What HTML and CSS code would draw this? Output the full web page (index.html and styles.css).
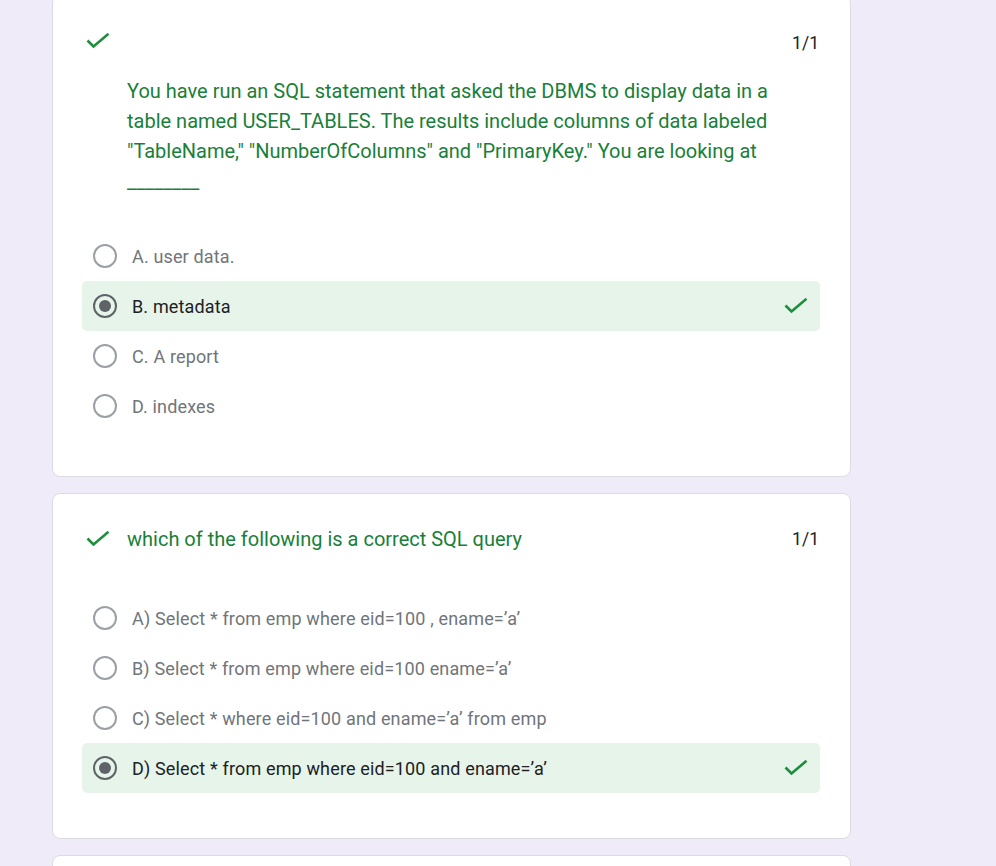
FILE: index.html
```html
<!DOCTYPE html>
<html>
<head>
<meta charset="utf-8">
<link rel="stylesheet" href="styles.css">
</head>
<body>
<div class="page">
  <div class="card card-first">
    <div class="head head-first">
      <svg class="tick" viewBox="0 0 24 16" width="24" height="16"><polyline points="1.5,7.5 7.5,13.5 22.5,0.8" fill="none" stroke="#1e8e3e" stroke-width="2.6"/></svg>
      <span class="score">1/1</span>
    </div>
    <div class="question q-block">You have run an SQL statement that asked the DBMS to display data in a table named USER_TABLES. The results include columns of data labeled "TableName," "NumberOfColumns" and "PrimaryKey." You are looking at ________</div>
    <div class="options opts-first">
      <div class="opt"><span class="radio"></span><span class="label">A. user data.</span></div>
      <div class="opt opt-correct"><span class="radio radio-on"><span class="dot"></span></span><span class="label label-on">B. metadata</span>
        <svg class="tick tick-row" viewBox="0 0 24 16" width="24" height="16"><polyline points="1.5,7.5 7.5,13.5 22.5,0.8" fill="none" stroke="#1e8e3e" stroke-width="2.6"/></svg></div>
      <div class="opt"><span class="radio"></span><span class="label">C. A report</span></div>
      <div class="opt"><span class="radio"></span><span class="label">D. indexes</span></div>
    </div>
  </div>

  <div class="card card-second">
    <div class="head head-inline">
      <svg class="tick" viewBox="0 0 24 16" width="24" height="16"><polyline points="1.5,7.5 7.5,13.5 22.5,0.8" fill="none" stroke="#1e8e3e" stroke-width="2.6"/></svg>
      <span class="question q-inline">which of the following is a correct SQL query</span>
      <span class="score">1/1</span>
    </div>
    <div class="options opts-second">
      <div class="opt"><span class="radio"></span><span class="label">A) Select * from emp where eid=100 , ename=’a’</span></div>
      <div class="opt"><span class="radio"></span><span class="label">B) Select * from emp where eid=100 ename=’a’</span></div>
      <div class="opt"><span class="radio"></span><span class="label">C) Select * where eid=100 and ename=’a’ from emp</span></div>
      <div class="opt opt-correct"><span class="radio radio-on"><span class="dot"></span></span><span class="label label-on">D) Select * from emp where eid=100 and ename=’a’</span>
        <svg class="tick tick-row" viewBox="0 0 24 16" width="24" height="16"><polyline points="1.5,7.5 7.5,13.5 22.5,0.8" fill="none" stroke="#1e8e3e" stroke-width="2.6"/></svg></div>
    </div>
  </div>

  <div class="card card-last"></div>
</div>
</body>
</html>
```

FILE: styles.css
```css
html, body {
  margin: 0;
  padding: 0;
  background: #f0ebf8;
  font-family: Roboto, "Liberation Sans", Arial, sans-serif;
}
.page {
  width: 799px;
  margin-left: 52px;
  overflow: hidden;
  height: 866px;
}
.card {
  box-sizing: border-box;
  background: #fff;
  border: 1px solid #dadce0;
  border-radius: 8px;
  margin-bottom: 16px;
  padding: 29px 30px 45px 29px;
}
.card-first {
  margin-top: -5px;
  padding-top: 30px;
}
.card-second {
  padding-top: 30px;
}
.card-last {
  height: 60px;
}
.head {
  display: flex;
  align-items: center;
  height: 30px;
  padding-right: 1px;
}
.tick {
  display: block;
  flex: none;
}
.head .tick {
  margin-left: 4px;
}
.score {
  margin-left: auto;
  font-size: 17.5px;
  color: #202124;
  line-height: 30px;
}
.head-first .score {
  margin-top: 3px;
}
.question {
  color: #188038;
  font-size: 20px;
  line-height: 30px;
}
.q-block {
  margin-top: 20px;
  margin-left: 45px;
  width: 660px;
}
.q-inline {
  margin-left: 17px;
}
.options {
  display: flex;
  flex-direction: column;
}
.opts-first {
  margin-top: 35px;
}
.opts-second {
  margin-top: 39px;
}
.opt {
  display: flex;
  align-items: center;
  height: 50px;
  padding: 0 12px 0 11px;
  border-radius: 5px;
}
.opt-correct {
  background: #e6f4ea;
}
.radio {
  box-sizing: border-box;
  flex: none;
  width: 24px;
  height: 24px;
  border: 2px solid #9aa0a6;
  border-radius: 50%;
  display: flex;
  align-items: center;
  justify-content: center;
}
.radio-on {
  border-color: #5f6368;
}
.dot {
  width: 12px;
  height: 12px;
  border-radius: 50%;
  background: #5f6368;
}
.label {
  margin-left: 15px;
  font-size: 18px;
  letter-spacing: 0.15px;
  color: #70757a;
}
.label-on {
  color: #202124;
}
.tick-row {
  margin-left: auto;
}
```
